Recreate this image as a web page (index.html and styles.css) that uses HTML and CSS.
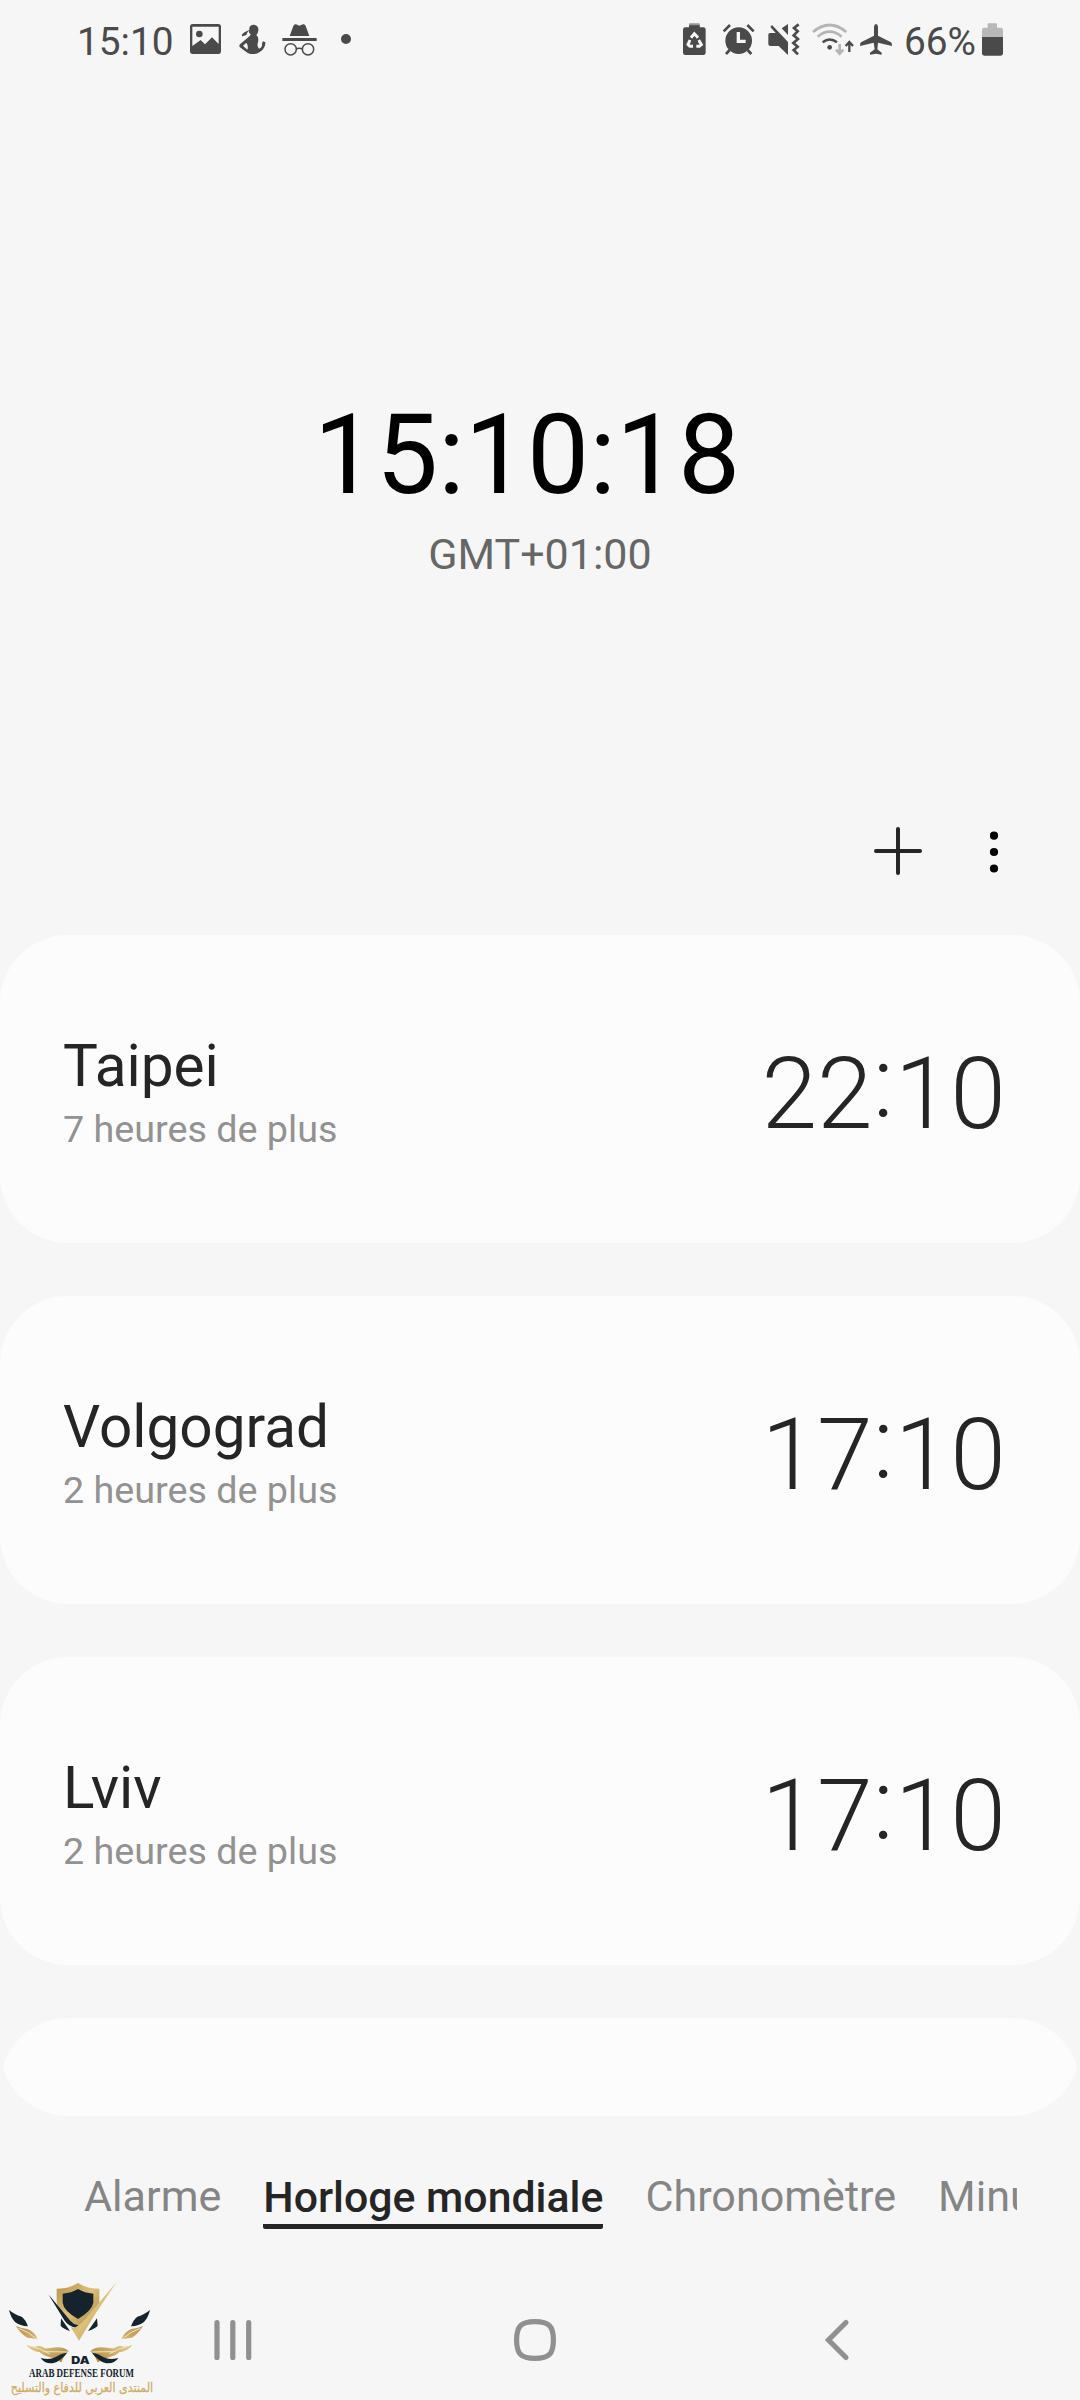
FILE: index.html
```html
<!DOCTYPE html>
<html lang="fr">
<head>
<meta charset="utf-8">
<title>Horloge mondiale</title>
<link rel="stylesheet" href="styles.css">
</head>
<body>
<div class="screen">
  <header class="status">
    <div class="status-left">
      <span class="status-time">15:10</span>
      <svg class="ic-picture" width="31" height="40" viewBox="390 60 93 120"><path fill-rule="evenodd" d="M398 72H475Q483 72 483 80V154Q483 162 475 162H398Q390 162 390 154V80Q390 72 398 72ZM397 80V138L422 120 435 133 456 112 476 132V80Z"/><circle cx="418" cy="102" r="10"/></svg>
      <svg class="ic-person" width="27" height="40" viewBox="538 60 81 120"><path fill-rule="evenodd" d="M569 83C571 76 579 73 586 75 594 77 597 84 596 91 596 98 592 102 590 106 596 110 597 118 595 127 592 135 594 141 598 146 606 143 608 137 607 130L610 124 617 127C618 138 610 151 600 156 590 164 570 164 563 158L541 142Q537 138 541 133L564 113Q573 107 573 103 567 99 567 92 562 97 560 105L548 109 546 105C551 96 560 95 569 90ZM560 128L550 137 563 149Q567 138 560 128Z"/></svg>
      <svg class="ic-incognito" width="35" height="40" viewBox="666 60 105 120"><path d="M689 108L700 78Q702 72 708 73L718 77 729 73Q735 72 737 78L748 108ZM667 114H770V123H667Z"/><g class="line4"><circle cx="692" cy="148" r="17"/><circle cx="744" cy="148" r="17"/><path d="M708 147Q718 143 728 147"/></g></svg>
      <svg class="ic-dot" width="12" height="40" viewBox="840 60 36 120"><circle cx="858" cy="117" r="15"/></svg>
    </div>
    <div class="status-right">
      <svg class="ic-saver" width="23" height="40" viewBox="39 60 69 120"><path d="M57 76V73Q57 70 60 70H86Q89 70 89 73V82H57Z" opacity=".55"/><path d="M57 76H89V82H100Q107 82 107 89V158Q107 165 100 165H46Q39 165 39 158V89Q39 82 46 82H57Z"/><g class="cut"><path d="M63 113L73 101 84 113M60 120L54 134 60 139H69M86 120L94 134 88 139H79"/></g><path d="M73 108L85 126H78V144H69V126H62Z"/></svg>
      <svg class="ic-alarm" width="34" height="40" viewBox="157 60 102 120"><circle cx="207" cy="122" r="40"/><path class="line8" d="M162 94L181 75M252 94L233 75M180 150L169 162M234 150L245 162"/><path class="white" d="M201 96H211V119H228V129H201Z"/></svg>
      <svg class="ic-mute" width="32" height="40" viewBox="294 60 96 120"><path d="M354 72V105L335 85ZM297 99H317L301 81 306 75 354 126V165L326 138H301Q295 138 295 132V104Q295 99 300 99Z"/><path class="line8" d="M386 73L372 84 383 94 371 106 384 117 370 129 383 140 371 150 384 163"/></svg>
      <svg class="ic-wifi" width="42" height="40" viewBox="425 60 126 120"><g class="faint"><path d="M428 96Q478 54 528 96M442 110Q478 80 514 110"/><path d="M508 132V160M497 149L508 161 519 149"/></g><path class="line7" d="M457 127Q478 110 500 127"/><circle cx="478" cy="142" r="7"/><path class="line6" d="M537 156V128M526 138L537 126 548 138"/></svg>
      <svg class="ic-plane" width="32" height="40" viewBox="570 60 96 120"><path d="M612 80Q613 72 618 72T624 80V107L663 127Q666 129 666 138L624 128 622 148 635 158V164L618 161 600 164V158L614 148 611 128 570 138Q570 129 573 127L612 107Z"/></svg>
      <span class="status-pct">66%</span>
      <svg class="ic-battery" width="21" height="40" viewBox="936 60 63 120"><path class="pale" d="M953 83V73Q953 70 956 70H978Q981 70 981 73V83H992Q999 83 999 90V111H936V90Q936 83 943 83Z"/><path d="M936 111H999V160Q999 167 992 167H943Q936 167 936 160Z"/></svg>
    </div>
  </header>

  <section class="now">
    <div class="now-time">15:10:18</div>
    <div class="now-zone">GMT+01:00</div>
  </section>

  <div class="actions">
    <svg class="add" width="48" height="50" viewBox="0 0 48 50"><path d="M2 25H46M24 3V47"/></svg>
    <svg class="more" width="10" height="42" viewBox="0 0 10 42"><circle cx="5" cy="4.7" r="4.1"/><circle cx="5" cy="21" r="4.1"/><circle cx="5" cy="37.5" r="4.1"/></svg>
  </div>

  <main class="cities">
    <article class="card">
      <div><h2 class="city">Taipei</h2><p class="offset">7 heures de plus</p></div>
      <div class="city-time">22<span class="colon">:</span>10</div>
    </article>
    <article class="card">
      <div><h2 class="city">Volgograd</h2><p class="offset">2 heures de plus</p></div>
      <div class="city-time">17<span class="colon">:</span>10</div>
    </article>
    <article class="card">
      <div><h2 class="city">Lviv</h2><p class="offset">2 heures de plus</p></div>
      <div class="city-time">17<span class="colon">:</span>10</div>
    </article>
    <article class="card"></article>
  </main>

  <nav class="tabs">
    <span class="tab">Alarme</span>
    <span class="tab active">Horloge mondiale</span>
    <span class="tab">Chronomètre</span>
    <span class="tab">Minuteur</span>
  </nav>

  <footer class="navbar">
    <svg width="38" height="44" viewBox="0 0 38 44"><path d="M3 4.500V39.500M18.800 4.500V39.500M34.700 4.500V39.500"/></svg>
    <svg class="home" width="44" height="44" viewBox="0 0 44 44"><path d="M22 3.600C36 3.600 40.400 8 40.400 22S36 40.400 22 40.400 3.600 36 3.600 22 8 3.600 22 3.600Z"/></svg>
    <svg width="26" height="44" viewBox="0 0 26 44"><path d="M22 4.500L4.500 22 22 39.500"/></svg>
  </footer>

  <svg class="emblem" width="170" height="140" viewBox="0 0 510 420">
    <defs>
      <linearGradient id="gold" x1="0" y1="0" x2="1" y2="1"><stop offset="0" stop-color="#b8914a"/><stop offset=".5" stop-color="#dcc07c"/><stop offset="1" stop-color="#a8823c"/></linearGradient>
      <g id="wing">
        <path class="navy" d="M27 150Q47 166 65 170 77 179 84 199 60 198 45 186 32 172 27 150Z"/>
        <path class="gold" d="M48 198Q66 206 83 207 105 216 113 238 91 233 82 233 63 223 48 198ZM80 255Q103 264 117 257 141 263 149 280 129 275 119 276 99 277 80 255ZM109 266Q138 266 152 264 191 257 206 274 194 284 184 307 157 293 132 286 121 280 109 266Z"/>
        <path class="vein" d="M56 205Q83 213 112 238M88 259Q120 263 149 281M130 275Q165 275 203 276"/>
        <path class="navy" d="M122 294Q149 301 166 292 179 282 201 278 184 302 161 309 135 313 122 294Z"/>
      </g>
    </defs>
    <use href="#wing"/>
    <use href="#wing" transform="translate(477 0) scale(-1 1)"/>
    <path class="gold" d="M170 86Q210 86 234 69 258 86 298 86V126Q292 161 234 198 175 163 170 126Z"/>
    <path class="navy" d="M188 101Q214 99 234 87 254 99 280 101V128Q276 151 234 177 190 151 188 128Z"/>
    <path class="navy" d="M145 103L211 182Q222 194 235 196L228 204Q205 199 193 181ZM183 175L210 213Q186 204 182 197ZM291 175L264 213Q288 204 293 197Z"/>
    <path class="gold" d="M350 66L287 160 237 242 212 201Q226 207 246 188L296 130Z"/>
    <text class="mono" x="214" y="311" textLength="55" lengthAdjust="spacingAndGlyphs">DA</text>
    <text class="forum" x="87" y="350" textLength="315" lengthAdjust="spacingAndGlyphs">ARAB DEFENSE FORUM</text>
    <text class="arabic" x="246" y="395" textLength="427" lengthAdjust="spacingAndGlyphs" direction="rtl" text-anchor="middle">المنتدى العربي للدفاع والتسليح</text>
  </svg>
</div>
</body>
</html>
```
FILE: styles.css
```css
* { box-sizing: border-box; margin: 0; padding: 0; }
body { background: #f6f6f6; font-family: Roboto, "Liberation Sans", sans-serif; color: #252525; }
svg { display: block; flex: none; }

.screen { position: relative; width: 1080px; height: 2400px; overflow: hidden; display: flex; flex-direction: column; background: #f6f6f6; }

.status { height: 80px; flex: none; padding: 20px 77px 0; display: flex; justify-content: space-between; color: #4a4a4a; fill: #4a4a4a; font-size: 38.800px; line-height: 43px; }
.status-left, .status-right { display: flex; height: 40px; }
.status-time { width: 113px; }
.ic-person { margin-left: 18px; }
.ic-incognito { margin-left: 16px; }
.ic-dot { margin-left: 23px; }
.ic-alarm { margin-left: 16px; }
.ic-mute { margin-left: 12px; }
.ic-wifi { margin-left: 12px; }
.ic-plane { margin-left: 6px; }
.status-pct { width: 77px; margin-left: 12px; }
.ic-battery { margin-left: 1px; }
.line4, .line6, .line7, .line8 { fill: none; stroke: #4a4a4a; stroke-width: 8; }
.line4 { stroke-width: 4.500; }
.line6 { stroke-width: 7; }
.line7 { stroke-width: 7.500; }
.faint { fill: none; stroke: #b5b5b5; stroke-width: 8; }
.cut { fill: none; stroke: #f6f6f6; stroke-width: 9; }
.white { fill: #f6f6f6; }
.pale { fill: #b8b8b8; }

.now { height: 721px; flex: none; padding-top: 310px; display: flex; flex-direction: column; align-items: center; }
.now-time { font-size: 110.600px; line-height: 130px; color: #000; margin-right: 26px; }
.now-zone { font-size: 43px; line-height: 50px; margin-top: 9px; color: #666; }

.actions { height: 134px; flex: none; padding: 25px 81px 0 0; display: flex; justify-content: flex-end; gap: 67px; }
.add { fill: none; stroke: #252525; stroke-width: 4; stroke-linecap: round; }
.more { fill: #000; margin-top: 5px; }

.cities { height: 1181px; flex: none; display: flex; flex-direction: column; gap: 53px; overflow: hidden; border-radius: 0 0 68px 68px; }
.card { height: 308px; flex: none; padding: 6px 74px 0 63px; display: flex; align-items: center; justify-content: space-between; background: #fcfcfc; border-radius: 68px; }
.city { font-size: 58.500px; font-weight: 400; line-height: 68px; }
.offset { font-size: 37.700px; line-height: 46px; margin-top: 6px; color: #929292; }
.city-time { font-size: 100.300px; font-weight: 300; line-height: 116px; }
.colon { display: inline-block; line-height: 1; margin-right: 1px; vertical-align: 11px; }

.tabs { height: 124px; flex: none; margin: 48px 63px 0 84px; display: flex; align-items: flex-start; gap: 42px; overflow: hidden; font-size: 43.100px; line-height: 66px; color: #858585; white-space: nowrap; }
.tab { flex: none; }
.active { height: 65px; font-size: 42.800px; color: #252525; font-weight: 500; border-bottom: 5px solid #252525; border-radius: 2px; }

.navbar { height: 112px; flex: none; padding: 30px 230px 0 214px; display: flex; justify-content: space-between; fill: none; stroke: #909090; stroke-width: 5.200; stroke-linecap: round; stroke-linejoin: miter; }
.home { margin-right: 6px; }

.emblem { position: absolute; left: 0; top: 2260px; overflow: visible; }
.gold { fill: url(#gold); }
.navy { fill: #14232c; }
.vein { fill: none; stroke: #f1e5c6; stroke-width: 3; }
.mono { font: 900 32px Inter, sans-serif; fill: #14232c; }
.forum { font: bold 37px "Liberation Serif", serif; fill: #14232c; }
.arabic { font: 39px "DejaVu Sans", sans-serif; fill: #cfae66; stroke: #cfae66; stroke-width: .8; }
```
